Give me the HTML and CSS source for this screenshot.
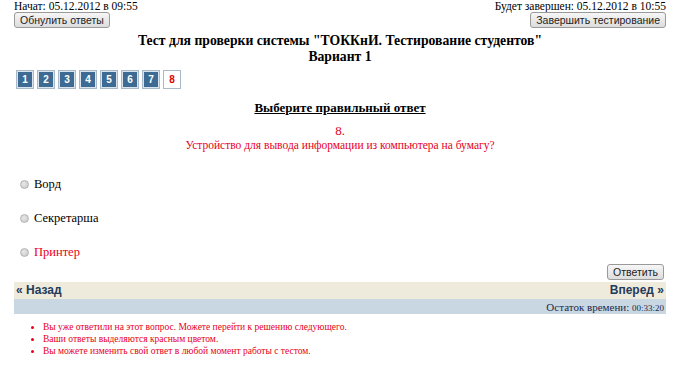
FILE: index.html
```html
<!DOCTYPE html>
<html>
<head>
  <title>Тестирование</title>
  <link rel="stylesheet" href="styles.css">
</head>
<body>
  <div class="page">
    <div class="top">
      <div class="top-left">
        <div class="time">Начат: 05.12.2012 в 09:55</div>
        <button class="btn">Обнулить ответы</button>
      </div>
      <div class="top-right">
        <div class="time">Будет завершен: 05.12.2012 в 10:55</div>
        <button class="btn">Завершить тестирование</button>
      </div>
    </div>

    <h1 class="title">Тест для проверки системы "ТОККнИ. Тестирование студентов"<br>Вариант 1</h1>

    <div class="pager">
      <span class="num">1</span>
      <span class="num">2</span>
      <span class="num">3</span>
      <span class="num">4</span>
      <span class="num">5</span>
      <span class="num">6</span>
      <span class="num">7</span>
      <span class="num current">8</span>
    </div>

    <h2 class="choose">Выберите правильный ответ</h2>

    <div class="question">
      <div>8.</div>
      <div>Устройство для вывода информации из компьютера на бумагу?</div>
    </div>

    <div class="answers">
      <div class="answer"><span class="radio"></span>Ворд</div>
      <div class="answer"><span class="radio"></span>Секретарша</div>
      <div class="answer chosen"><span class="radio"></span>Принтер</div>
    </div>

    <div class="submit-row">
      <button class="btn">Ответить</button>
    </div>

    <div class="nav">
      <a href="#">&laquo; Назад</a>
      <a href="#">Вперед &raquo;</a>
    </div>
    <div class="remain">Остаток времени: <span class="clock">00:33:20</span></div>

    <ul class="notes">
      <li>Вы уже ответили на этот вопрос. Можете перейти к решению следующего.</li>
      <li>Ваши ответы выделяются красным цветом.</li>
      <li>Вы можете изменить свой ответ в любой момент работы с тестом.</li>
    </ul>
  </div>
</body>
</html>
```

FILE: styles.css
```css
body {
  margin: 0;
  padding: 0;
  background-color: #ffffff;
  font-family: "Liberation Serif", "Times New Roman", serif;
  color: #000000;
}

.page {
  padding: 0 18px 0 14px;
}

.top {
  display: flex;
  justify-content: space-between;
}

.top-left,
.top-right {
  display: flex;
  flex-direction: column;
}

.top-left {
  align-items: flex-start;
}

.top-right {
  align-items: flex-end;
}

.time {
  font-size: 11.5px;
  line-height: 12px;
}

.btn {
  height: 16px;
  margin-top: 0;
  padding: 0 5px;
  font-family: "Liberation Sans", Arial, sans-serif;
  font-size: 10.5px;
  line-height: 14px;
  color: #222222;
  background: linear-gradient(#f6f6f6, #dddddd);
  border: 1px solid #9a9a9a;
  border-radius: 3px;
}

.title {
  margin: 5px 0 0 0;
  font-size: 13.7px;
  line-height: 16px;
  text-align: center;
}

.pager {
  display: flex;
  gap: 3px;
  margin: 5px 0 0 2px;
}

.num {
  width: 14px;
  height: 15px;
  border: 2px solid #d9e4ee;
  outline: 1px solid #a9b9c8;
  outline-offset: -1px;
  background-color: #3d6b93;
  color: #ffffff;
  font-family: "Liberation Sans", Arial, sans-serif;
  font-size: 10px;
  font-weight: bold;
  line-height: 15px;
  text-align: center;
}

.num.current {
  background-color: #ffffff;
  color: #e00000;
  border-color: #ffffff;
}

.choose {
  margin: 11px 0 0 0;
  font-size: 13px;
  line-height: 16px;
  text-align: center;
  text-decoration: underline;
}

.question {
  margin-top: 8px;
  color: #e8001c;
  font-size: 11.5px;
  line-height: 14px;
  text-align: center;
}

.question div:first-child {
  font-size: 13px;
}

.answers {
  display: flex;
  flex-direction: column;
  gap: 20px;
  margin-top: 25px;
}

.answer {
  display: flex;
  align-items: center;
  gap: 5px;
  font-size: 12.5px;
  line-height: 14px;
}

.radio {
  width: 7px;
  height: 7px;
  margin-left: 6px;
  border: 1px solid #b4b4b4;
  border-radius: 50%;
  background: radial-gradient(circle at 40% 40%, #e8e8e8, #c4c4c4);
}

.answer.chosen {
  color: #e8001c;
}

.submit-row {
  display: flex;
  justify-content: flex-end;
  margin-top: 5px;
  padding-right: 2px;
}

.nav {
  display: flex;
  justify-content: space-between;
  margin-top: 2px;
  height: 17px;
  padding: 0 2px;
  background-color: #efebdc;
  font-family: "Liberation Sans", Arial, sans-serif;
  font-size: 12px;
  font-weight: bold;
  line-height: 17px;
}

.nav a {
  color: #243a5a;
  text-decoration: none;
}

.remain {
  height: 15px;
  padding-right: 2px;
  background-color: #c9d7e3;
  color: #1b2a4a;
  font-size: 11px;
  line-height: 17px;
  text-align: right;
}

.clock {
  font-size: 9px;
}

.notes {
  margin: 7px 0 0 0;
  padding-left: 29px;
  color: #e8001c;
  font-size: 9.5px;
  line-height: 12px;
}
```
